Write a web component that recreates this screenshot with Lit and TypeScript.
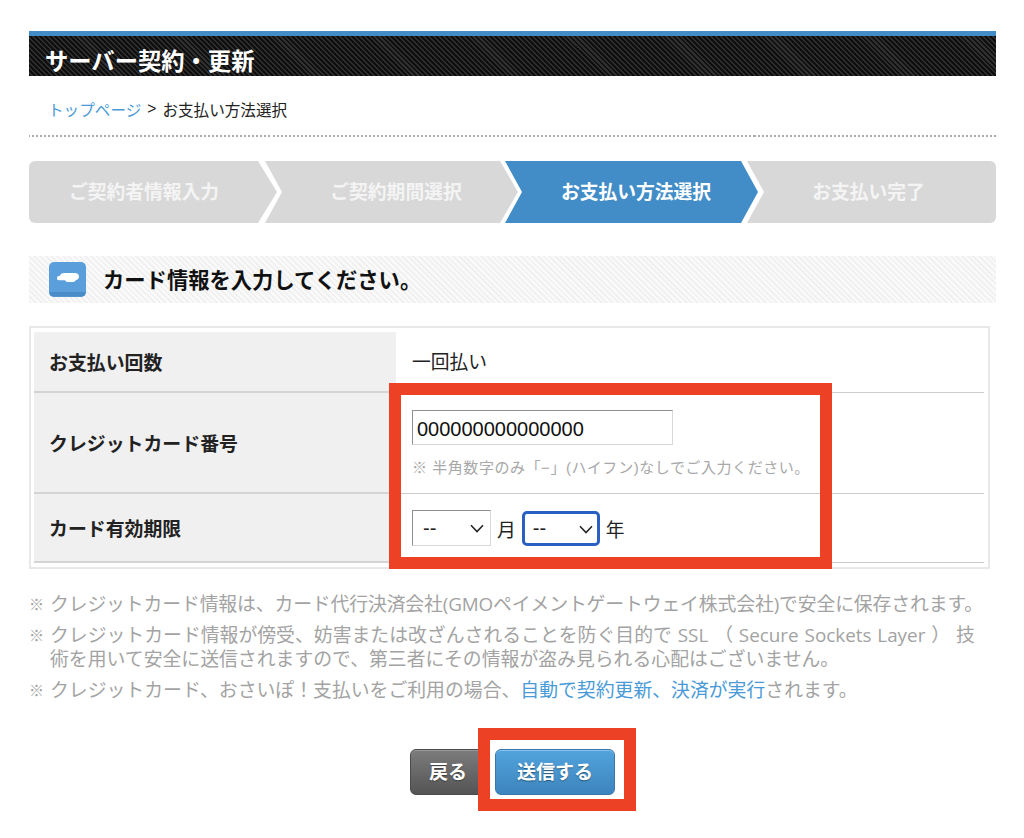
import { LitElement, html, css } from "lit";
import { customElement } from "lit/decorators.js";

const chevron = html`<svg class="chev" width="14" height="9" viewBox="0 0 14 9"><path d="M1 1.2 7 7.6 13 1.2" fill="none" stroke="#222" stroke-width="1.5"/></svg>`;

@customElement("app-root")
export class AppRoot extends LitElement {
  static styles = css`
    :host {
      display: block;
      height: 838px;
      position: relative;
      background: #fff;
      overflow: hidden;
      font-family: "Liberation Sans", "Noto Sans CJK JP", sans-serif;
      color: #222;
    }
    .page { padding: 31px 28px 0 29px; }
    .hdr {
      border-top: 5px solid #428dc7;
      background: repeating-linear-gradient(45deg, #0f0f0f 0 2px, #2f2f2f 2px 3.5px);
      color: #fff;
      font-size: 23.3px;
      font-weight: 700;
      line-height: 26px;
      padding: 13px 0 0 16px;
      box-sizing: border-box;
      height: 45px;
      overflow: hidden;
      white-space: nowrap;
    }
    .crumb {
      height: 61px;
      padding-left: 19px;
      display: flex;
      align-items: center;
      font-size: 15.6px;
      border-bottom: 2px solid #aaa;
      border-image: repeating-linear-gradient(90deg, #aaa 0 2px, transparent 2px 4px) 1;
      box-sizing: border-box;
      margin-bottom: 24px;
      padding-top: 6px;
    }
    .crumb a { color: #4a9ad8; text-decoration: none; }
    .crumb .sep { margin: 0 6px; }
    .steps { display: flex; height: 62px; }
    .step {
      display: flex;
      align-items: center;
      justify-content: center;
      background: #d8d8d8;
      color: #f4f4f4;
      font-size: 18.8px;
      font-weight: 700;
      white-space: nowrap;
      box-sizing: border-box;
      padding-bottom: 3px;
    }
    .s1 { width: 248px; border-radius: 6px 0 0 6px; clip-path: polygon(0 0, 229px 0, 100% 50%, 229px 100%, 0 100%); padding-right: 18px; }
    .s2 { width: 253px; margin-left: -12px; padding-left: 9px; clip-path: polygon(0 0, 235px 0, 100% 50%, 235px 100%, 0 100%, 17px 50%); }
    .s3 { width: 253px; margin-left: -13px; padding-left: 9px; background: #428dc7; color: #fff; clip-path: polygon(0 0, 236px 0, 100% 50%, 236px 100%, 0 100%, 17px 50%); }
    .s4 { width: 249px; margin-left: -11px; padding-right: 6px; border-radius: 0 6px 6px 0; clip-path: polygon(0 0, 100% 0, 100% 100%, 0 100%, 17px 50%); }
    .title {
      margin-top: 33px;
      height: 47px;
      display: flex;
      align-items: center;
      gap: 17px;
      padding-left: 20px;
      background: repeating-linear-gradient(45deg, #f1f1f1 0 2px, #fafafa 2px 4px);
      font-size: 21.3px;
      font-weight: 700;
      color: #111;
    }
    .title span { padding-bottom: 2px; }
    .table {
      margin-top: 23px;
      width: 961px;
      height: 243px;
      box-sizing: border-box;
      border: 2px solid #e8e8e8;
      padding: 4px 4px 5px 3px;
      display: grid;
      grid-template-columns: 362px 1fr;
      grid-template-rows: 61px 101px 69px;
    }
    .th {
      background: #f0f0f0;
      border-bottom: 2px solid #d4d4d4;
      display: flex;
      align-items: center;
      padding-left: 15px;
      font-size: 18.9px;
      font-weight: 700;
      color: #222;
    }
    .td {
      border-bottom: 1px solid #ccc;
      padding-left: 16px;
      font-size: 18.8px;
    }
    .td.one { display: flex; align-items: center; padding-bottom: 4px; }
    .td.two { padding-top: 17px; box-sizing: border-box; }
    .td.three { display: flex; align-items: center; gap: 6px; }
    input {
      display: block;
      width: 261px;
      height: 35px;
      box-sizing: border-box;
      border: 1px solid #d8d8d8;
      border-top: 1.5px solid #8e8e8e;
      border-left: 1.5px solid #8e8e8e;
      padding: 4px 4px 0;
      font: 20px "Liberation Sans", sans-serif;
      color: #111;
      outline: none;
      border-radius: 0;
    }
    .hint {
      margin-top: 13px;
      font-size: 15px;
      letter-spacing: 0.55px;
      color: #a8a8a8;
      line-height: 20px;
      white-space: nowrap;
    }
    .sel { position: relative; display: block; width: 79px; height: 36px; }
    .sel.focus { width: 78px; height: 35px; }
    select {
      appearance: none;
      width: 100%;
      height: 100%;
      box-sizing: border-box;
      background: #fff;
      border: 1px solid #d8d8d8;
      border-top: 1.5px solid #8e8e8e;
      border-left: 1.5px solid #8e8e8e;
      padding: 0 10px;
      font: 20px "Liberation Sans", sans-serif;
      color: #222;
      border-radius: 0;
      outline: none;
    }
    .focus select { border: 3px solid #2a5fc4; border-radius: 5px; padding: 0 8px; }
    .chev { position: absolute; right: 7px; top: 14px; pointer-events: none; }
    .notes {
      margin: 23px 0 0;
      padding: 0;
      list-style: none;
      font-family: "Open Sans", "Noto Sans CJK JP", sans-serif;
      font-size: 18.85px;
      word-spacing: 1px;
      line-height: 24px;
      color: #a3a3a3;
      white-space: nowrap;
    }
    .notes li { display: flex; margin-bottom: 7px; }
    .notes .tight { letter-spacing: -0.14px; }
    .notes .m { width: 21px; flex: none; font-size: 15px; }
    .notes a { color: #4a9ad8; text-decoration: none; }
    .btns { margin-top: 47px; display: flex; justify-content: center; gap: 9px; }
    .btn {
      height: 46px;
      box-sizing: border-box;
      border-radius: 6px;
      color: #fff;
      font-family: inherit;
      font-size: 19px;
      font-weight: 700;
      text-shadow: 0 1px 1px rgba(0,0,0,.4);
      padding: 0 0 3px;
      cursor: pointer;
    }
    .back { width: 76px; background: linear-gradient(#7c7c7c, #545454); border: 1px solid #4b4b4b; box-shadow: inset 0 1px 0 #999; }
    .send { width: 120px; background: linear-gradient(#52a3dd, #3d84bd); border: 1px solid #3878ad; box-shadow: inset 0 1px 0 #86c3ec; }
    .frame { position: absolute; box-sizing: border-box; border: 12px solid #ec4125; pointer-events: none; }
    .f1 { left: 389px; top: 383px; width: 443px; height: 186px; }
    .f2 { left: 478px; top: 728px; width: 158px; height: 83px; }
    .ico { flex: none; display: block; }
  `;

  render() {
    return html`
      <div class="page">
        <div class="hdr">サーバー契約・更新</div>
        <div class="crumb"><a href="#">トップページ</a><span class="sep">&gt;</span><span>お支払い方法選択</span></div>
        <div class="steps">
          <div class="step s1">ご契約者情報入力</div>
          <div class="step s2">ご契約期間選択</div>
          <div class="step s3">お支払い方法選択</div>
          <div class="step s4">お支払い完了</div>
        </div>
        <div class="title">
          <svg class="ico" width="37" height="35" viewBox="0 0 37 35">
            <rect x="0" y="0" width="37" height="35" rx="5" fill="#5a9fdc"/>
            <path d="M0.500 30h36v.5a4 4 0 0 1-4 4h-28a4 4 0 0 1-4-4z" fill="#4a8cc8"/>
            <path d="M8 16c0-1.500 1.200-2.200 3-2.200 .5-1.800 2-2.800 4-2.800h11c2.500 0 4 1.500 4 3.500 0 2.200-1.500 3.300-3 3.500-.7 1.300-1.600 2-3 2h-5c-1.400 0-2.400-.7-3-1.800H10c-1.300 0-2-1-2-2z" fill="#fff"/>
          </svg>
          <span>カード情報を入力してください。</span>
        </div>
        <div class="table">
          <div class="th">お支払い回数</div>
          <div class="td one">一回払い</div>
          <div class="th">クレジットカード番号</div>
          <div class="td two">
            <input type="text" .value=${"000000000000000"} />
            <div class="hint">※ 半角数字のみ「−」(ハイフン)なしでご入力ください。</div>
          </div>
          <div class="th">カード有効期限</div>
          <div class="td three">
            <span class="sel"><select><option>--</option></select>${chevron}</span>
            <span>月</span>
            <span class="sel focus"><select><option>--</option></select>${chevron}</span>
            <span>年</span>
          </div>
        </div>
        <ul class="notes">
          <li><span class="m">※</span><span class="tight">クレジットカード情報は、カード代行決済会社(GMOペイメントゲートウェイ株式会社)で安全に保存されます。</span></li>
          <li><span class="m">※</span><span>クレジットカード情報が傍受、妨害または改ざんされることを防ぐ目的で SSL （ Secure Sockets Layer ） 技<br />術を用いて安全に送信されますので、第三者にその情報が盗み見られる心配はございません。</span></li>
          <li><span class="m">※</span><span>クレジットカード、おさいぽ！支払いをご利用の場合、<a href="#">自動で契約更新、決済が実行</a>されます。</span></li>
        </ul>
        <div class="btns">
          <button class="btn back">戻る</button>
          <button class="btn send">送信する</button>
        </div>
      </div>
      <div class="frame f1"></div>
      <div class="frame f2"></div>
    `;
  }
}
